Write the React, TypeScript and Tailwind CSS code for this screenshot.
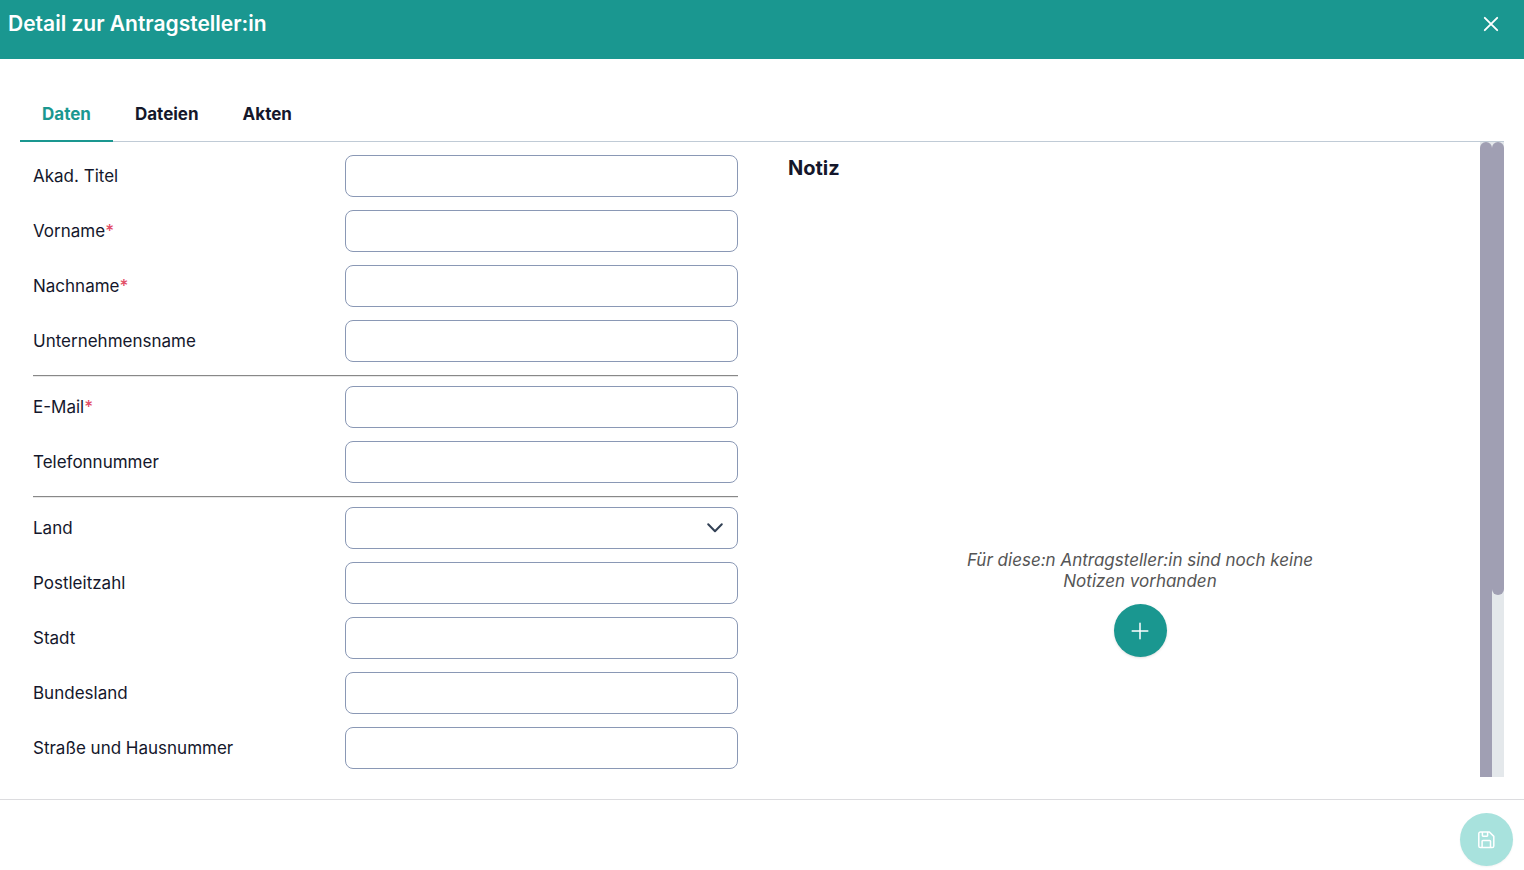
import { useState } from 'react'
import type { ReactNode } from 'react'

type Field = {
  id: string
  label: string
  required?: boolean
  type?: 'text' | 'email' | 'tel' | 'select'
}

const TABS = ['Daten', 'Dateien', 'Akten']

const GROUPS: Field[][] = [
  [
    { id: 'title', label: 'Akad. Titel' },
    { id: 'firstName', label: 'Vorname', required: true },
    { id: 'lastName', label: 'Nachname', required: true },
    { id: 'company', label: 'Unternehmensname' },
  ],
  [
    { id: 'email', label: 'E-Mail', required: true, type: 'email' },
    { id: 'phone', label: 'Telefonnummer', type: 'tel' },
  ],
  [
    { id: 'country', label: 'Land', type: 'select' },
    { id: 'zip', label: 'Postleitzahl' },
    { id: 'city', label: 'Stadt' },
    { id: 'state', label: 'Bundesland' },
    { id: 'street', label: 'Straße und Hausnummer' },
  ],
]

const CONTROL =
  'block h-[42px] w-full rounded-lg border border-[#8a98b5] bg-white px-3 text-[17px] outline-none focus:border-[#1a9790]'

function Icon({ className, children }: { className: string; children: ReactNode }) {
  return (
    <svg
      aria-hidden="true"
      viewBox="0 0 18 18"
      fill="none"
      stroke="currentColor"
      strokeLinecap="round"
      strokeLinejoin="round"
      className={className}
    >
      {children}
    </svg>
  )
}

function FieldRow({ field }: { field: Field }) {
  return (
    <div className="flex items-center">
      <label htmlFor={field.id} className="flex-1 leading-[22px]">
        {field.label}
        {field.required && <span className="font-medium text-[#e24c66]">*</span>}
      </label>
      <div className="relative w-[393px]">
        {field.type === 'select' ? (
          <>
            <select id={field.id} className={`${CONTROL} appearance-none`} defaultValue="">
              <option value=""></option>
              <option value="de">Deutschland</option>
              <option value="at">Österreich</option>
            </select>
            <Icon className="pointer-events-none absolute top-3 right-3.5 size-[18px] text-[#334155]">
              <path d="M2.2 5.3 9 12.3 15.8 5.3" strokeWidth="2" />
            </Icon>
          </>
        ) : (
          <input id={field.id} type={field.type ?? 'text'} className={CONTROL} />
        )}
      </div>
    </div>
  )
}

function Scrollbar({ thumb }: { thumb: string }) {
  return (
    <div className="w-3 shrink-0 overflow-hidden bg-[#e4e8eb]">
      <div className={`rounded-full bg-[#a09fb3] ${thumb}`} />
    </div>
  )
}

export default function App() {
  const [active, setActive] = useState('Daten')

  return (
    <div className="flex h-screen flex-col bg-white font-['Inter','Liberation_Sans',sans-serif] text-[17px] leading-[21px] text-[#14172b]">
      <header className="flex h-[59px] shrink-0 items-start justify-between bg-[#1a9790] pt-2.5 pr-6 pl-2 text-white">
        <h1 className="text-[21px] leading-7 font-semibold">Detail zur Antragsteller:in</h1>
        <button type="button" aria-label="Schließen" className="mt-[5px]">
          <Icon className="size-[18px]">
            <path d="M2.8 2.8 15.2 15.2M15.2 2.8 2.8 15.2" strokeWidth="1.9" />
          </Icon>
        </button>
      </header>

      <main className="flex min-h-0 flex-1 flex-col px-5 pt-7 pb-[22px]">
        <div role="tablist" className="flex shrink-0 border-b border-[#c0cbd6]">
          {TABS.map((tab) => (
            <button
              key={tab}
              type="button"
              role="tab"
              aria-selected={tab === active}
              onClick={() => setActive(tab)}
              className={`-mb-px border-b-2 px-[22px] pt-[17px] pb-[15px] font-bold ${
                tab === active ? 'border-[#1a9790] text-[#1a9790]' : 'border-transparent'
              }`}
            >
              {tab}
            </button>
          ))}
        </div>

        <div className="flex min-h-0 flex-1">
          <div className="min-w-0 flex-1 overflow-hidden">
            <div className="flex min-h-[890px]">
              <form className="w-1/2 pt-[13px] pr-3 pl-[13px]">
                {GROUPS.map((fields, i) => (
                  <div key={fields[0].id}>
                    {i > 0 && (
                      <hr className="mt-[13px] mb-[9px] h-0.5 border-t border-b border-t-[#888] border-b-[#e8e8e8]" />
                    )}
                    <div className="flex flex-col gap-[13px]">
                      {fields.map((field) => (
                        <FieldRow key={field.id} field={field} />
                      ))}
                    </div>
                  </div>
                ))}
              </form>

              <section className="flex w-1/2 flex-col pt-3 pl-[38px]">
                <h2 className="text-xl leading-7 font-bold">Notiz</h2>
                <div className="flex flex-1 flex-col items-center justify-center gap-3 pb-[7px] pl-3">
                  <p className="max-w-[380px] text-center text-[#555] italic">
                    Für diese:n Antragsteller:in sind noch keine Notizen vorhanden
                  </p>
                  <button
                    type="button"
                    aria-label="Notiz hinzufügen"
                    className="flex size-[53px] items-center justify-center rounded-full bg-[#1a9790] text-white shadow-sm"
                  >
                    <Icon className="size-[18px]">
                      <path d="M9 1.2V16.8M1.2 9H16.8" strokeWidth="1.5" />
                    </Icon>
                  </button>
                </div>
              </section>
            </div>
          </div>
          <Scrollbar thumb="h-[110%]" />
          <Scrollbar thumb="h-[453px]" />
        </div>
      </main>

      <footer className="flex shrink-0 justify-end border-t border-[#dcdcdf] pt-[13px] pr-[11px] pb-1">
        <button
          type="button"
          aria-label="Speichern"
          disabled
          className="flex size-[53px] items-center justify-center rounded-full bg-[#a8e2dd] text-white shadow-xs"
        >
          <Icon className="size-[18px]">
            <path
              d="M2.4 1H11.4L15.8 5.4V15A1.6 1.6 0 0 1 14.2 16.6H2.4A1.6 1.6 0 0 1 .8 15V2.6A1.6 1.6 0 0 1 2.4 1ZM4.1 16.4V10.2A.8.8 0 0 1 4.9 9.4H11.7A.8.8 0 0 1 12.5 10.2V16.4M4.4 1.2V4.6A.6.6 0 0 0 5 5.2H9A.6.6 0 0 0 9.6 4.6V1.2"
              strokeWidth="1.5"
            />
          </Icon>
        </button>
      </footer>
    </div>
  )
}
